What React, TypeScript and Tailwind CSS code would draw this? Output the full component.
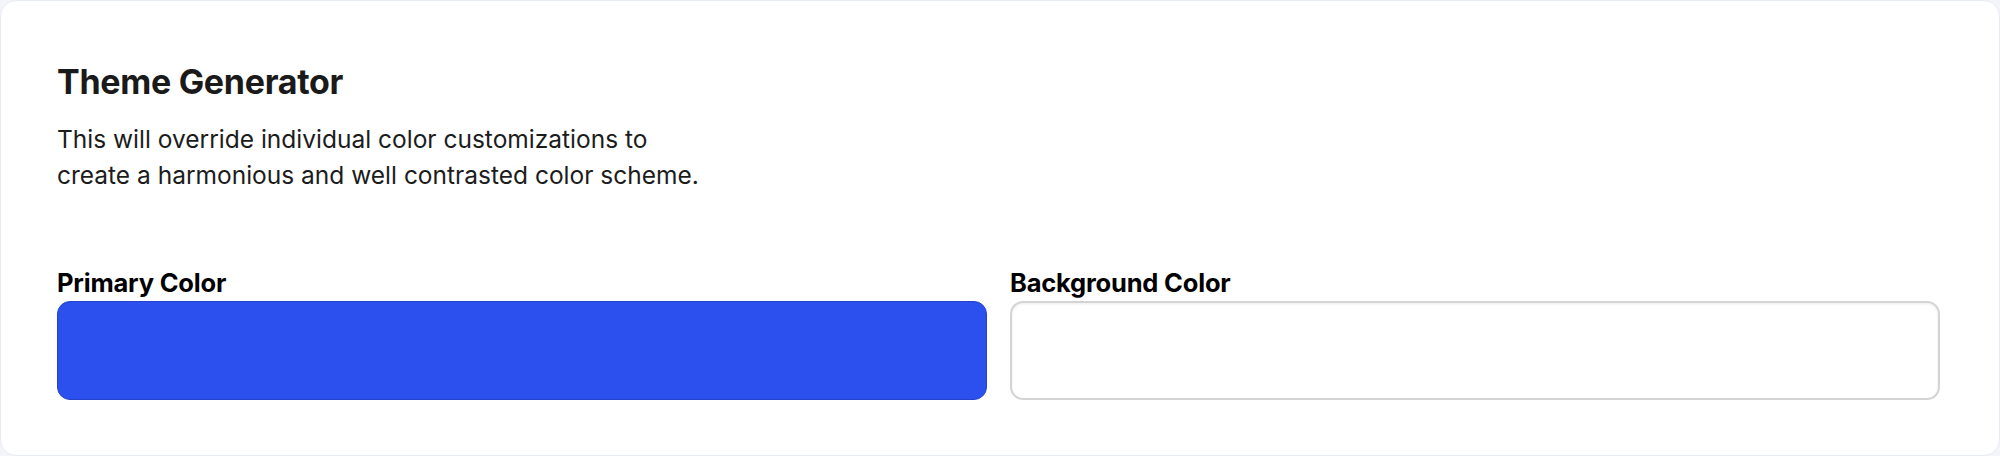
export default function App() {
  return (
    <div className="w-[2000px] h-[456px] bg-[#f3f5fa] font-['Inter',sans-serif]">
      <div className="h-full bg-white border border-[#e7ebf3] rounded-[16px] px-[56px] pt-[61px]">
        <h1 className="text-[34px] leading-[40px] font-bold tracking-[-0.3px] text-[#1a1a1a]">Theme Generator</h1>
        <p className="mt-[19px] text-[24.5px] leading-[36px] text-[#1c1c1c]">
          This will override individual color customizations to
          <br />
          create a harmonious and well contrasted color scheme.
        </p>
        <div className="mt-[75px] grid grid-cols-2 gap-[23px] pr-[3px]">
          <div>
            <label className="block text-[25.5px] leading-[29px] font-bold tracking-[-0.2px] text-black">Primary Color</label>
            <div className="mt-[4px] h-[99px] rounded-[13px] bg-[#2c50ee] border border-[#2443c9]" />
          </div>
          <div>
            <label className="block text-[25.5px] leading-[29px] font-bold tracking-[-0.2px] text-black">Background Color</label>
            <div className="mt-[4px] h-[99px] rounded-[13px] bg-white border-2 border-[#d4d4d4] shadow-[inset_0_1px_3px_rgba(0,0,0,0.08)]" />
          </div>
        </div>
      </div>
    </div>
  );
}
